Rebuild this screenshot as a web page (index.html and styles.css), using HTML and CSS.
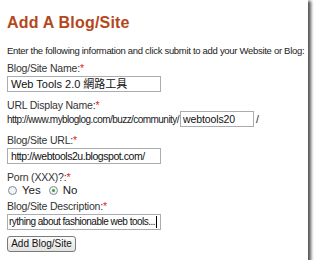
FILE: index.html
```html
<!DOCTYPE html>
<html>
<head>
<meta charset="utf-8">
<link rel="stylesheet" href="styles.css">
</head>
<body>
<div class="page">
  <h1 class="title">Add A Blog/Site</h1>
  <p class="intro">Enter the following information and click submit to add your Website or Blog:</p>
  <div class="field">
    <div class="label">Blog/Site Name:<span class="req">*</span></div>
    <div class="input wide">Web Tools 2.0 網路工具</div>
  </div>
  <div class="field">
    <div class="label">URL Display Name:<span class="req">*</span></div>
    <div class="urlrow"><span class="prefix">http://www.mybloglog.com/buzz/community/</span><div class="input short">webtools20</div><span class="slash">/</span></div>
  </div>
  <div class="field">
    <div class="label">Blog/Site URL:<span class="req">*</span></div>
    <div class="input wide url">http://webtools2u.blogspot.com/</div>
  </div>
  <div class="field">
    <div class="label">Porn (XXX)?:<span class="req">*</span></div>
    <div class="radios">
      <span class="radio"></span><span class="rlabel">Yes</span>
      <span class="radio on"></span><span class="rlabel">No</span>
    </div>
  </div>
  <div class="field desc-field">
    <div class="label">Blog/Site Description:<span class="req">*</span></div>
    <div class="input wide clip desc"><span>rything about fashionable web tools...</span><span class="caret"></span></div>
  </div>
  <div class="btn">Add Blog/Site</div>
</div>
</body>
</html>
```
FILE: styles.css
```css
html, body { margin: 0; padding: 0; background: #fff; }
body { font-family: "Liberation Sans", Arial, sans-serif; color: #222; }
.page {
  width: 308px; height: 260px; box-sizing: border-box;
  padding: 14px 0 0 7px; background: #fff;
  box-shadow: 2px 2px 3px 1px #555;
}
.title {
  margin: 0; font-size: 16px; line-height: 18px; font-weight: bold;
  color: #b4481c; font-family: "Liberation Sans", Arial, sans-serif;
  letter-spacing: 0.2px;
}
.intro {
  margin: 13px 0 0; font-size: 9.5px; line-height: 12px; color: #222;
  letter-spacing: -0.3px; white-space: nowrap;
}
.field { margin-top: 7px; }
.field:first-of-type { margin-top: 5px; }
.label { font-size: 10.5px; line-height: 13px; color: #333; letter-spacing: -0.2px; }
.req { color: #d22; }
.input {
  box-sizing: border-box; height: 16px; border: 1px solid #a8adb3;
  font-size: 11px; line-height: 14px; padding: 0 3px; color: #111; background: #fff;
  white-space: nowrap; font-family: "Liberation Sans", "Noto Sans CJK TC", sans-serif;
}
.url { font-size: 10.5px; letter-spacing: -0.45px; }
.wide { width: 154px; margin-top: 1px; }
.short { width: 74px; margin: 0 2px 0 1px; padding-left: 2px; font-size: 10.5px; letter-spacing: -0.1px; }
.urlrow { display: flex; align-items: center; margin-top: -1px; color: #222; }
.prefix { font-size: 10px; letter-spacing: -0.55px; }
.slash { font-size: 10.5px; }
.radios { display: flex; align-items: center; font-size: 11.5px; height: 12px; }
.radio {
  width: 9px; height: 9px; border: 1px solid #7b8a99; border-radius: 50%;
  box-sizing: border-box; display: inline-flex; align-items: center; justify-content: center;
  background: #f4f4f4; margin-left: 1px;
}
.radio.on::after { content: ""; width: 3px; height: 3px; border-radius: 50%; background: #3a9a3a; }
.rlabel { margin: 0 7px 0 5px; color: #222; }
.desc-field { margin-top: 4px; }
.clip { overflow: hidden; display: flex; align-items: center; padding-left: 1px; }
.desc { font-size: 10px; letter-spacing: -0.5px; }
.caret { width: 1px; height: 12px; background: #000; margin-left: 1px; flex: none; }
.btn {
  margin-top: 6px; width: 69px; height: 16px; box-sizing: border-box;
  border: 1px solid #7a7a7a; border-radius: 3px;
  background: linear-gradient(#fbfbfb, #e2e2e2);
  font-size: 10px; line-height: 14px; text-align: center; color: #111;
}
```
